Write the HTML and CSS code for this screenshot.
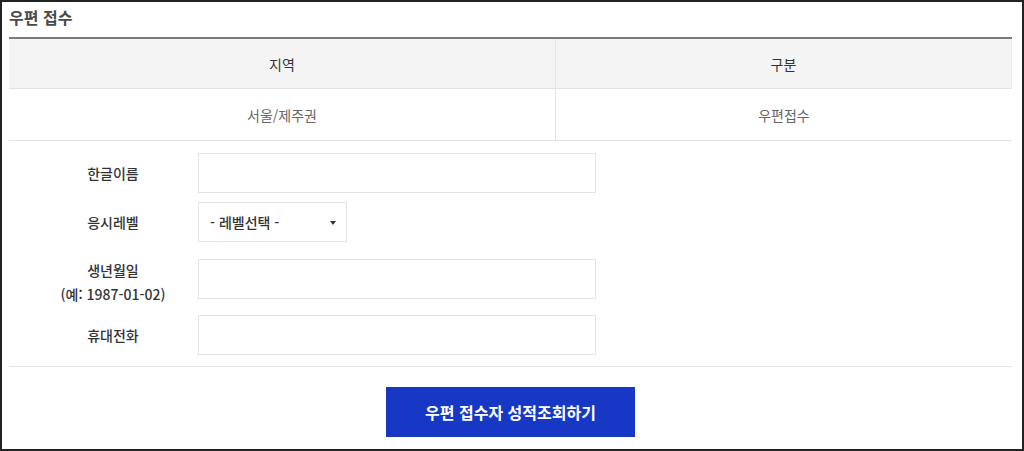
FILE: index.html
```html
<!DOCTYPE html>
<html lang="ko">
<head>
<meta charset="utf-8">
<title>우편 접수</title>
<link rel="stylesheet" href="styles.css">
</head>
<body>
<div class="frame">
  <h2 class="title">우편 접수</h2>
  <div class="info-table">
    <div class="cell head">지역</div>
    <div class="cell head last">구분</div>
    <div class="cell body">서울/제주권</div>
    <div class="cell body last">우편접수</div>
  </div>
  <form class="form">
    <div class="row r1">
      <label class="label">한글이름</label>
      <input class="field wide" type="text">
    </div>
    <div class="row r2">
      <label class="label">응시레벨</label>
      <div class="select"><span>- 레벨선택 -</span></div>
    </div>
    <div class="row r3">
      <label class="label two">생년월일<br>(예: 1987-01-02)</label>
      <input class="field wide" type="text">
    </div>
    <div class="row r4">
      <label class="label">휴대전화</label>
      <input class="field wide" type="text">
    </div>
  </form>
  <div class="actions">
    <button class="btn" type="button">우편 접수자 성적조회하기</button>
  </div>
</div>
</body>
</html>
```

FILE: styles.css
```css
* { box-sizing: border-box; }
html, body { margin: 0; padding: 0; background: #fff; }
body {
  font-family: "Noto Sans CJK KR", "Noto Sans", sans-serif;
  color: #333;
}
.frame {
  width: 1024px;
  height: 451px;
  border: 2px solid #222;
  padding: 2px 10px 0 7px;
  overflow: hidden;
}
.title {
  margin: 0;
  font-size: 16px;
  font-weight: 700;
  line-height: 26px;
  color: #4a4a4a;
  height: 26px;
}
.info-table {
  margin-top: 7px;
  display: grid;
  grid-template-columns: 547px 1fr;
  border-top: 2px solid #7a7a7a;
}
.cell {
  display: flex;
  align-items: center;
  justify-content: center;
  font-size: 14px;
  border-bottom: 1px solid #e3e3e3;
  border-right: 1px solid #e3e3e3;
}
.cell.last { border-right: 1px solid #ececec; }
.cell.body.last { border-right: none; }
.head {
  height: 50px;
  background: #f4f4f4;
  color: #333;
}
.body {
  height: 52px;
  color: #666;
}
.form {
  display: flex;
  flex-direction: column;
  margin: 0;
  padding-bottom: 11px;
  border-bottom: 1px solid #e3e3e3;
}
.row {
  display: flex;
  align-items: center;
}
.r1 { margin-top: 12px; }
.r2 { margin-top: 9px; }
.r3 { margin-top: 10px; }
.r4 { margin-top: 9px; }
.label {
  width: 170px;
  margin-left: 19px;
  text-align: center;
  font-size: 14px;
  font-weight: 500;
  line-height: 24px;
  color: #333;
}
.label.two { padding-top: 6px; }
.field {
  height: 40px;
  border: 1px solid #e3e3e3;
  background: #fff;
  outline: none;
  font-family: inherit;
  font-size: 14px;
  padding: 0 10px;
}
.wide { width: 398px; }
.select {
  position: relative;
  width: 149px;
  height: 40px;
  border: 1px solid #e3e3e3;
  padding-left: 11px;
  display: flex;
  align-items: center;
  font-size: 14px;
  font-weight: 500;
  color: #333;
}
.select::after {
  content: "";
  position: absolute;
  right: 10px;
  top: 18px;
  border-left: 3.5px solid transparent;
  border-right: 3.5px solid transparent;
  border-top: 4px solid #333;
}
.actions {
  display: flex;
  justify-content: center;
  padding-top: 20px;
}
.btn {
  width: 249px;
  height: 50px;
  border: none;
  background: #1638c4;
  color: #fff;
  font-family: inherit;
  font-size: 16px;
  font-weight: 700;
  cursor: pointer;
}
```
